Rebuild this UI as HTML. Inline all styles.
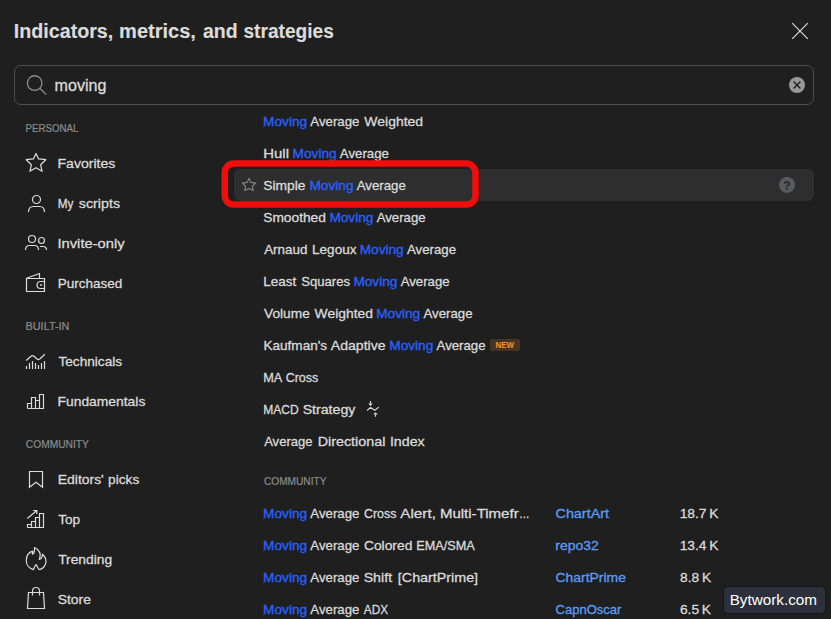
<!DOCTYPE html>
<html lang="en">
<head>
<meta charset="utf-8">
<title>Indicators, metrics, and strategies</title>
<style>
html,body{margin:0;padding:0;}
body{width:831px;height:619px;overflow:hidden;background:#1f1f1f;color:#dbdbdb;
  font-family:"Liberation Sans","DejaVu Sans",sans-serif;font-size:14px;position:relative;}
.abs{position:absolute;white-space:nowrap;}
.s{position:absolute;height:40px;line-height:40px;white-space:pre;transform-origin:0 50%;-webkit-text-stroke:0.3px currentColor;}
#close{left:786px;top:17px;width:28px;height:28px;}
#search{left:14px;top:65px;width:798px;height:38px;border:1px solid #4e4e4e;border-radius:7px;}
#sicon{left:22px;top:71px;width:28px;height:28px;}
#sclear{left:788px;top:76px;width:18px;height:18px;}
.ic{position:absolute;left:22px;width:28px;height:28px;fill:none;stroke:#dbdbdb;stroke-width:1.2;}
#hl{left:234px;top:169px;width:580px;height:32px;background:#2e2e2e;border-radius:6px;}
#new{left:490px;top:339px;width:30px;height:12px;border-radius:2px;background:#453424;}
#wm{left:723px;top:585.5px;width:101px;height:26px;border:1px solid #15171c;border-radius:5px;background:#2b303b;}
</style>
</head>
<body>
<svg id="close" class="abs" viewBox="0 0 28 28"><path d="M6.2 6.2l15.600 15.600M21.800 6.200l-15.600 15.600" stroke="#dbdbdb" stroke-width="1.2" fill="none"/></svg>
<div id="search" class="abs"></div>
<svg id="sicon" class="abs" viewBox="0 0 28 28" fill="none" stroke="#8c8c8c" stroke-width="1.3"><circle cx="12.65" cy="12.05" r="7.3"/><path d="M17.8 17.2l6.600 6.400"/></svg>
<svg id="sclear" class="abs" viewBox="0 0 18 18"><circle cx="9" cy="9" r="8" fill="#999999"/><path d="M5.600 5.600l6.800 6.800M12.400 5.600l-6.800 6.800" stroke="#1f1f1f" stroke-width="1.400" fill="none"/></svg>

<!-- sidebar icons -->
<svg class="ic" style="top:149px" viewBox="0 0 28 28" stroke-linejoin="round"><path d="M14 4.500L16.600 9.900L23.800 10.700L18.600 15.700L20.100 22.300L14 18.700L7.900 22.300L9.400 15.700L4.200 10.700L11.400 9.900Z"/></svg>
<svg class="ic" style="top:189px" viewBox="0 0 28 28"><circle cx="14.500" cy="10.500" r="4"/><path d="M6.500 23C6.500 19.500 8.500 17.500 11.500 17.500H17.500C20.500 17.500 22.500 19.500 22.500 23"/></svg>
<svg class="ic" style="top:229px" viewBox="0 0 28 28"><circle cx="10" cy="10" r="3.500"/><path d="M3.500 21C3.500 18.500 5 16.500 7.500 16.500H12.500C15 16.500 16.500 18.500 16.500 21"/><circle cx="19.500" cy="11.500" r="3"/><path d="M18 17.500H21C23 17.500 24.500 19 24.500 21"/></svg>
<svg class="ic" style="top:269px" viewBox="0 0 28 28"><path d="M4.500 9.500H22.500V22.500H4.500ZM4.500 9.200L17.500 4.500V9.500"/><path d="M22.500 12.500H18.500A3.500 3.500 0 0 0 18.500 19.500H22.500"/><circle cx="19" cy="16" r=".9" fill="#dbdbdb" stroke="none"/></svg>
<svg class="ic" style="top:347px" viewBox="0 0 28 28" stroke-width="1.100"><path d="M4.200 13.500L9 9.200Q10.400 8 11.800 9L15 12Q16.400 13.200 17.800 12L22.800 7.200"/><path d="M4.500 19V22M7.500 16V22M10.500 14V22M13.500 16V22M16.500 18V22M19.500 16V22M22.500 14V22"/></svg>
<svg class="ic" style="top:387px" viewBox="0 0 28 28"><path d="M5.500 21.500V16.500H9.500V21.500M9.500 16.500V10.500H13.500V21.500M13.500 13.500H17.500V21.500M17.500 13.500V7.500H21.500V21.500H5.500"/></svg>
<svg class="ic" style="top:465px" viewBox="0 0 28 28"><path d="M7.500 6.500H20.500V22.300L14 17.300L7.500 22.300Z"/></svg>
<svg class="ic" style="top:505px" viewBox="0 0 28 28"><path d="M5.500 22.500V19.500H9.500V22.500M9.500 19.500V16.500H13.500V22.500M13.500 16.500V12.500H17.500V22.500M17.500 12.500V8.500H21.500V22.500H5.500"/><path d="M5.300 13.500L14.800 5.500M11.200 5.500H14.800V9"/></svg>
<svg class="ic" style="top:545px" viewBox="0 0 28 28" stroke-linejoin="round" stroke-width="1"><path d="M12.500 2.500C15 3.500 18.400 7 18.200 10C18.100 12 17.600 13.500 17.300 14.500C19 14 20.300 12 20.500 9.200C22.500 11 24 13.500 24 16.500C24 20.500 21 23.800 17.400 24.600C16 23.500 14.800 21.500 14.400 19.500C13 20.500 11.800 22.500 11.500 24.600C7.500 23.500 4.300 20 4.300 15.500C4.300 11 7 7.300 10.800 6.200C10.500 7.200 10.300 8.200 10.400 9.100C11.500 8.700 12.300 7.800 12.400 6.500C12.600 5 12.500 3.500 12.500 2.500Z"/></svg>
<svg class="ic" style="top:585px" viewBox="0 0 28 28"><path d="M6.500 7.500H21.500L22.500 23.500H5.500Z"/><path d="M10.500 10.500V6A3.500 3.500 0 0 1 17.500 6V10.500"/></svg>

<!-- main list decorations -->
<div id="hl" class="abs"></div>
<svg class="abs" style="left:240px;top:176px;width:18px;height:18px" viewBox="0 0 18 18" fill="none" stroke="#868686" stroke-width="1.100" stroke-linejoin="round"><path d="M9 2.300L10.800 6.400L15.700 7.100L12.300 10.400L13.200 14.400L9 12.400L4.700 14.400L5.600 10.400L2.300 7.100L7.200 6.400Z"/></svg>
<svg class="abs" style="left:779px;top:177px;width:16px;height:16px" viewBox="0 0 16 16"><circle cx="8" cy="7.900" r="8" fill="#585a60"/><text x="8" y="13" font-size="12" font-weight="bold" text-anchor="middle" fill="#262626" font-family="Liberation Sans,sans-serif">?</text></svg>
<div id="new" class="abs"></div>
<svg class="abs" style="left:360px;top:396px;width:26px;height:26px" viewBox="0 0 26 26" fill="none" stroke="#dbdbdb" stroke-width="1.100"><path d="M10.500 5V8M15.500 18.500V20.800"/><path d="M7.100 14.500L10.500 11.400L14.700 14.300L18.900 11.100"/><path d="M8.200 7.400H12.800L10.500 9.900ZM13.200 18.500H17.900L15.500 16.200Z" fill="#dbdbdb" stroke="none"/></svg>
<div id="wm" class="abs"></div>

<span class="s" style="left:13px;top:11px;font-size:20px;font-weight:bold;color:#dbdbdb;-webkit-text-stroke-width:0.15px;transform:translate(0.82px,0px) scaleX(0.9834)">Indicators,</span>
<span class="s" style="left:119px;top:11px;font-size:20px;font-weight:bold;color:#dbdbdb;-webkit-text-stroke-width:0.15px;transform:translate(0.10px,0px) scaleX(1.0007)">metrics,</span>
<span class="s" style="left:203px;top:11px;font-size:20px;font-weight:bold;color:#dbdbdb;-webkit-text-stroke-width:0.15px;transform:translate(0.04px,0px) scaleX(0.9727)">and</span>
<span class="s" style="left:243px;top:11px;font-size:20px;font-weight:bold;color:#dbdbdb;-webkit-text-stroke-width:0.15px;transform:translate(0.48px,0px) scaleX(0.9557)">strategies</span>
<span class="s" style="left:54px;top:66px;font-size:15.6px;color:#dbdbdb;-webkit-text-stroke-width:0.3px;transform:translate(0.61px,0px) scaleX(1.0308)">moving</span>
<span class="s" style="left:25px;top:108px;font-size:11px;color:#8c8c8c;-webkit-text-stroke-width:0.2px;transform:translate(0.55px,0px) scaleX(0.8835)">PERSONAL</span>
<span class="s" style="left:25px;top:306px;font-size:11px;color:#8c8c8c;-webkit-text-stroke-width:0.2px;transform:translate(0.49px,0px) scaleX(0.9904)">BUILT-IN</span>
<span class="s" style="left:25px;top:424px;font-size:11px;color:#8c8c8c;-webkit-text-stroke-width:0.2px;transform:translate(0.84px,0px) scaleX(0.9298)">COMMUNITY</span>
<span class="s" style="left:263px;top:461px;font-size:11px;color:#8c8c8c;-webkit-text-stroke-width:0.2px;transform:translate(0.94px,0px) scaleX(0.9209)">COMMUNITY</span>
<span class="s" style="left:57px;top:144px;font-size:13.6px;color:#dbdbdb;-webkit-text-stroke-width:0.3px;transform:translate(0.45px,0px) scaleX(1.0361)">Favorites</span>
<span class="s" style="left:57px;top:184px;font-size:13.6px;color:#dbdbdb;-webkit-text-stroke-width:0.3px;transform:translate(0.77px,0px) scaleX(0.8687)">My</span>
<span class="s" style="left:78px;top:184px;font-size:13.6px;color:#dbdbdb;-webkit-text-stroke-width:0.3px;transform:translate(0.78px,0px) scaleX(1.0529)">scripts</span>
<span class="s" style="left:57px;top:224px;font-size:13.6px;color:#dbdbdb;-webkit-text-stroke-width:0.3px;transform:translate(0.47px,0px) scaleX(1.0834)">Invite-only</span>
<span class="s" style="left:57px;top:264px;font-size:13.6px;color:#dbdbdb;-webkit-text-stroke-width:0.3px;transform:translate(0.68px,0px) scaleX(0.9946)">Purchased</span>
<span class="s" style="left:58px;top:342px;font-size:13.6px;color:#dbdbdb;-webkit-text-stroke-width:0.3px;transform:translate(0.44px,0px) scaleX(1.0031)">Technicals</span>
<span class="s" style="left:57px;top:382px;font-size:13.6px;color:#dbdbdb;-webkit-text-stroke-width:0.3px;transform:translate(0.57px,0px) scaleX(1.0184)">Fundamentals</span>
<span class="s" style="left:57px;top:460px;font-size:13.6px;color:#dbdbdb;-webkit-text-stroke-width:0.3px;transform:translate(0.76px,0px) scaleX(1.0247)">Editors&#39;</span>
<span class="s" style="left:108px;top:460px;font-size:13.6px;color:#dbdbdb;-webkit-text-stroke-width:0.3px;transform:translate(0.06px,0px) scaleX(1.0062)">picks</span>
<span class="s" style="left:58px;top:500px;font-size:13.6px;color:#dbdbdb;-webkit-text-stroke-width:0.3px;transform:translate(0.14px,0px) scaleX(0.9994)">Top</span>
<span class="s" style="left:58px;top:540px;font-size:13.6px;color:#dbdbdb;-webkit-text-stroke-width:0.3px;transform:translate(0.14px,0px) scaleX(1.0166)">Trending</span>
<span class="s" style="left:57px;top:580px;font-size:13.6px;color:#dbdbdb;-webkit-text-stroke-width:0.3px;transform:translate(0.65px,0px) scaleX(1.0253)">Store</span>
<span class="s" style="left:263px;top:102px;font-size:13.6px;color:#2962ff;-webkit-text-stroke-width:0.3px;transform:translate(0.08px,0px) scaleX(1.0050)">Moving</span>
<span class="s" style="left:310px;top:102px;font-size:13.6px;color:#dbdbdb;-webkit-text-stroke-width:0.3px;transform:translate(0.36px,0px) scaleX(0.9730)">Average</span>
<span class="s" style="left:364px;top:102px;font-size:13.6px;color:#dbdbdb;-webkit-text-stroke-width:0.3px;transform:translate(0.37px,0px) scaleX(1.0258)">Weighted</span>
<span class="s" style="left:263px;top:134px;font-size:13.6px;color:#dbdbdb;-webkit-text-stroke-width:0.3px;transform:translate(0.21px,0px) scaleX(1.1019)">Hull</span>
<span class="s" style="left:292px;top:134px;font-size:13.6px;color:#2962ff;-webkit-text-stroke-width:0.3px;transform:translate(0.58px,0px) scaleX(1.0050)">Moving</span>
<span class="s" style="left:339px;top:134px;font-size:13.6px;color:#dbdbdb;-webkit-text-stroke-width:0.3px;transform:translate(0.86px,0px) scaleX(0.9730)">Average</span>
<span class="s" style="left:263px;top:166px;font-size:13.6px;color:#dbdbdb;-webkit-text-stroke-width:0.3px;transform:translate(0.25px,0px) scaleX(1.0173)">Simple</span>
<span class="s" style="left:309px;top:166px;font-size:13.6px;color:#2962ff;-webkit-text-stroke-width:0.3px;transform:translate(0.48px,0px) scaleX(1.0050)">Moving</span>
<span class="s" style="left:356px;top:166px;font-size:13.6px;color:#dbdbdb;-webkit-text-stroke-width:0.3px;transform:translate(0.76px,0px) scaleX(0.9730)">Average</span>
<span class="s" style="left:263px;top:198px;font-size:13.6px;color:#dbdbdb;-webkit-text-stroke-width:0.3px;transform:translate(0.26px,0px) scaleX(1.0110)">Smoothed</span>
<span class="s" style="left:329px;top:198px;font-size:13.6px;color:#2962ff;-webkit-text-stroke-width:0.3px;transform:translate(0.38px,0px) scaleX(1.0050)">Moving</span>
<span class="s" style="left:376px;top:198px;font-size:13.6px;color:#dbdbdb;-webkit-text-stroke-width:0.3px;transform:translate(0.66px,0px) scaleX(0.9730)">Average</span>
<span class="s" style="left:264px;top:230px;font-size:13.6px;color:#dbdbdb;-webkit-text-stroke-width:0.3px;transform:translate(0.16px,0px) scaleX(0.9868)">Arnaud</span>
<span class="s" style="left:312px;top:230px;font-size:13.6px;color:#dbdbdb;-webkit-text-stroke-width:0.3px;transform:translate(0.08px,0px) scaleX(0.9941)">Legoux</span>
<span class="s" style="left:359px;top:230px;font-size:13.6px;color:#2962ff;-webkit-text-stroke-width:0.3px;transform:translate(0.68px,0px) scaleX(1.0050)">Moving</span>
<span class="s" style="left:406px;top:230px;font-size:13.6px;color:#dbdbdb;-webkit-text-stroke-width:0.3px;transform:translate(0.96px,0px) scaleX(0.9730)">Average</span>
<span class="s" style="left:263px;top:262px;font-size:13.6px;color:#dbdbdb;-webkit-text-stroke-width:0.3px;transform:translate(0.29px,0px) scaleX(0.9895)">Least</span>
<span class="s" style="left:301px;top:262px;font-size:13.6px;color:#dbdbdb;-webkit-text-stroke-width:0.3px;transform:translate(0.18px,0px) scaleX(0.9653)">Squares</span>
<span class="s" style="left:353px;top:262px;font-size:13.6px;color:#2962ff;-webkit-text-stroke-width:0.3px;transform:translate(0.38px,0px) scaleX(1.0050)">Moving</span>
<span class="s" style="left:400px;top:262px;font-size:13.6px;color:#dbdbdb;-webkit-text-stroke-width:0.3px;transform:translate(0.66px,0px) scaleX(0.9730)">Average</span>
<span class="s" style="left:264px;top:294px;font-size:13.6px;color:#dbdbdb;-webkit-text-stroke-width:0.3px;transform:translate(0.06px,0px) scaleX(1.0077)">Volume</span>
<span class="s" style="left:314px;top:294px;font-size:13.6px;color:#dbdbdb;-webkit-text-stroke-width:0.3px;transform:translate(0.57px,0px) scaleX(1.0205)">Weighted</span>
<span class="s" style="left:376px;top:294px;font-size:13.6px;color:#2962ff;-webkit-text-stroke-width:0.3px;transform:translate(0.18px,0px) scaleX(1.0050)">Moving</span>
<span class="s" style="left:423px;top:294px;font-size:13.6px;color:#dbdbdb;-webkit-text-stroke-width:0.3px;transform:translate(0.46px,0px) scaleX(0.9730)">Average</span>
<span class="s" style="left:263px;top:326px;font-size:13.6px;color:#dbdbdb;-webkit-text-stroke-width:0.3px;transform:translate(0.48px,0px) scaleX(0.9966)">Kaufman&#39;s</span>
<span class="s" style="left:330px;top:326px;font-size:13.6px;color:#dbdbdb;-webkit-text-stroke-width:0.3px;transform:translate(0.77px,0px) scaleX(1.0368)">Adaptive</span>
<span class="s" style="left:389px;top:326px;font-size:13.6px;color:#2962ff;-webkit-text-stroke-width:0.3px;transform:translate(0.28px,0px) scaleX(1.0050)">Moving</span>
<span class="s" style="left:436px;top:326px;font-size:13.6px;color:#dbdbdb;-webkit-text-stroke-width:0.3px;transform:translate(0.56px,0px) scaleX(0.9730)">Average</span>
<span class="s" style="left:263px;top:358px;font-size:13.6px;color:#dbdbdb;-webkit-text-stroke-width:0.3px;transform:translate(0.23px,0px) scaleX(0.9360)">MA</span>
<span class="s" style="left:285px;top:358px;font-size:13.6px;color:#dbdbdb;-webkit-text-stroke-width:0.3px;transform:translate(0.66px,0px) scaleX(0.9204)">Cross</span>
<span class="s" style="left:263px;top:390px;font-size:13.6px;color:#dbdbdb;-webkit-text-stroke-width:0.3px;transform:translate(0.26px,0px) scaleX(0.8872)">MACD</span>
<span class="s" style="left:302px;top:390px;font-size:13.6px;color:#dbdbdb;-webkit-text-stroke-width:0.3px;transform:translate(0.64px,0px) scaleX(1.0421)">Strategy</span>
<span class="s" style="left:264px;top:422px;font-size:13.6px;color:#dbdbdb;-webkit-text-stroke-width:0.3px;transform:translate(0.16px,0px) scaleX(0.9591)">Average</span>
<span class="s" style="left:317px;top:422px;font-size:13.6px;color:#dbdbdb;-webkit-text-stroke-width:0.3px;transform:translate(0.63px,0px) scaleX(1.0551)">Directional</span>
<span class="s" style="left:389px;top:422px;font-size:13.6px;color:#dbdbdb;-webkit-text-stroke-width:0.3px;transform:translate(0.90px,0px) scaleX(1.0442)">Index</span>
<span class="s" style="left:263px;top:494px;font-size:13.6px;color:#2962ff;-webkit-text-stroke-width:0.3px;transform:translate(0.08px,0px) scaleX(1.0050)">Moving</span>
<span class="s" style="left:310px;top:494px;font-size:13.6px;color:#dbdbdb;-webkit-text-stroke-width:0.3px;transform:translate(0.36px,0px) scaleX(0.9730)">Average</span>
<span class="s" style="left:363px;top:494px;font-size:13.6px;color:#dbdbdb;-webkit-text-stroke-width:0.3px;transform:translate(0.96px,0px) scaleX(0.9147)">Cross</span>
<span class="s" style="left:400px;top:494px;font-size:13.6px;color:#dbdbdb;-webkit-text-stroke-width:0.3px;transform:translate(0.29px,0px) scaleX(1.1233)">Alert,</span>
<span class="s" style="left:439px;top:494px;font-size:13.6px;color:#dbdbdb;-webkit-text-stroke-width:0.3px;transform:translate(0.90px,0px) scaleX(1.1053)">Multi-Timefr</span><span class="s" style="left:519px;top:494px;font-size:13.6px;color:#dbdbdb;-webkit-text-stroke-width:0.3px;transform:translate(0.06px,0px) scaleX(0.7796)">…</span>
<span class="s" style="left:263px;top:526px;font-size:13.6px;color:#2962ff;-webkit-text-stroke-width:0.3px;transform:translate(0.08px,0px) scaleX(1.0050)">Moving</span>
<span class="s" style="left:310px;top:526px;font-size:13.6px;color:#dbdbdb;-webkit-text-stroke-width:0.3px;transform:translate(0.36px,0px) scaleX(0.9730)">Average</span>
<span class="s" style="left:363px;top:526px;font-size:13.6px;color:#dbdbdb;-webkit-text-stroke-width:0.3px;transform:translate(0.92px,0px) scaleX(1.0169)">Colored</span>
<span class="s" style="left:416px;top:526px;font-size:13.6px;color:#dbdbdb;-webkit-text-stroke-width:0.3px;transform:translate(0.33px,0px) scaleX(0.9303)">EMA/SMA</span>
<span class="s" style="left:263px;top:558px;font-size:13.6px;color:#2962ff;-webkit-text-stroke-width:0.3px;transform:translate(0.08px,0px) scaleX(1.0050)">Moving</span>
<span class="s" style="left:310px;top:558px;font-size:13.6px;color:#dbdbdb;-webkit-text-stroke-width:0.3px;transform:translate(0.36px,0px) scaleX(0.9730)">Average</span>
<span class="s" style="left:363px;top:558px;font-size:13.6px;color:#dbdbdb;-webkit-text-stroke-width:0.3px;transform:translate(0.63px,0px) scaleX(1.0470)">Shift</span>
<span class="s" style="left:397px;top:558px;font-size:13.6px;color:#dbdbdb;-webkit-text-stroke-width:0.3px;transform:translate(0.86px,0px) scaleX(1.0517)">[ChartPrime]</span>
<span class="s" style="left:263px;top:590px;font-size:13.6px;color:#2962ff;-webkit-text-stroke-width:0.3px;transform:translate(0.08px,0px) scaleX(1.0050)">Moving</span>
<span class="s" style="left:310px;top:590px;font-size:13.6px;color:#dbdbdb;-webkit-text-stroke-width:0.3px;transform:translate(0.36px,0px) scaleX(0.9730)">Average</span>
<span class="s" style="left:363px;top:590px;font-size:13.6px;color:#dbdbdb;-webkit-text-stroke-width:0.3px;transform:translate(0.84px,0px) scaleX(0.8688)">ADX</span>
<span class="s" style="left:555px;top:494px;font-size:13.6px;color:#5b9cf6;-webkit-text-stroke-width:0.3px;transform:translate(0.51px,0px) scaleX(1.0564)">ChartArt</span>
<span class="s" style="left:679px;top:494px;font-size:13.6px;color:#dbdbdb;-webkit-text-stroke-width:0.3px;transform:translate(0.66px,0px) scaleX(1.0162)">18.7 K</span>
<span class="s" style="left:555px;top:526px;font-size:13.6px;color:#5b9cf6;-webkit-text-stroke-width:0.3px;transform:translate(0.35px,0px) scaleX(1.0280)">repo32</span>
<span class="s" style="left:679px;top:526px;font-size:13.6px;color:#dbdbdb;-webkit-text-stroke-width:0.3px;transform:translate(0.66px,0px) scaleX(1.0162)">13.4 K</span>
<span class="s" style="left:555px;top:558px;font-size:13.6px;color:#5b9cf6;-webkit-text-stroke-width:0.3px;transform:translate(0.52px,0px) scaleX(1.0247)">ChartPrime</span>
<span class="s" style="left:679px;top:558px;font-size:13.6px;color:#dbdbdb;-webkit-text-stroke-width:0.3px;transform:translate(1.00px,0px) scaleX(1.0126)">8.8 K</span>
<span class="s" style="left:555px;top:590px;font-size:13.6px;color:#5b9cf6;-webkit-text-stroke-width:0.3px;transform:translate(0.54px,0px) scaleX(0.9588)">CapnOscar</span>
<span class="s" style="left:679px;top:590px;font-size:13.6px;color:#dbdbdb;-webkit-text-stroke-width:0.3px;transform:translate(0.93px,0px) scaleX(1.0147)">6.5 K</span>
<span class="s" style="left:729px;top:580px;font-size:15.2px;color:#ffffff;-webkit-text-stroke-width:0px;transform:translate(0.63px,-0.4px) scaleX(1.0052)">Bytwork.com</span>
<span class="s" style="left:495px;top:325px;font-size:8.5px;font-weight:bold;color:#f0912a;-webkit-text-stroke-width:0.1px;transform:translate(0.47px,0px) scaleX(0.9259)">NEW</span>

<svg class="abs" style="left:0;top:0;width:831px;height:619px;pointer-events:none" viewBox="0 0 831 619"><rect x="224.75" y="163.6" width="250.7" height="41" rx="9" ry="9" fill="none" stroke="#f20d0d" stroke-width="6.5"/></svg>
</body>
</html>
